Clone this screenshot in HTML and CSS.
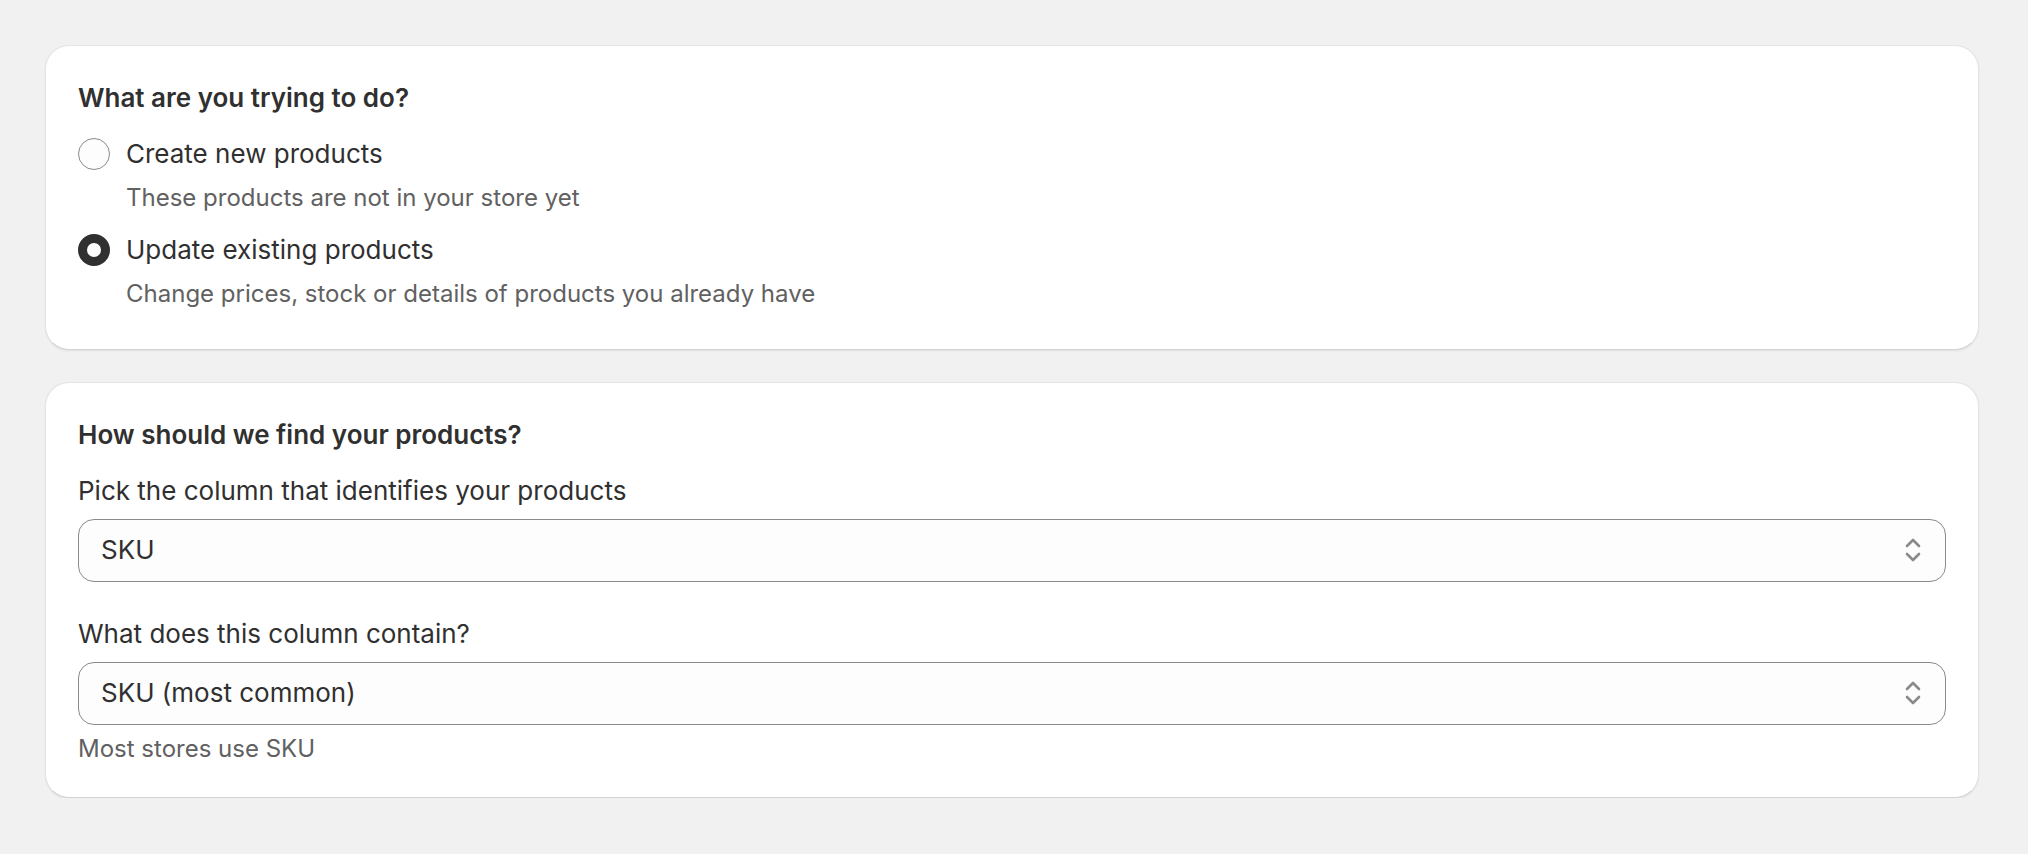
FILE: index.html
```html
<!DOCTYPE html>
<html lang="en">
<head>
<meta charset="utf-8">
<title>Import products</title>
<link rel="stylesheet" href="styles.css">
</head>
<body>
<main class="page">
  <section class="card card-mode">
    <h2 class="card-title">What are you trying to do?</h2>
    <div class="choices">
      <div class="choice">
        <div class="choice-row">
          <span class="radio"></span>
          <span class="choice-label">Create new products</span>
        </div>
        <div class="choice-desc">These products are not in your store yet</div>
      </div>
      <div class="choice">
        <div class="choice-row">
          <span class="radio radio-checked"></span>
          <span class="choice-label">Update existing products</span>
        </div>
        <div class="choice-desc">Change prices, stock or details of products you already have</div>
      </div>
    </div>
  </section>

  <section class="card">
    <h2 class="card-title">How should we find your products?</h2>
    <div class="field">
      <div class="field-label">Pick the column that identifies your products</div>
      <div class="select">
        <span class="select-value">SKU</span>
        <svg class="select-icon" width="16" height="26" viewBox="0 0 16 26" aria-hidden="true"><polyline points="2,9 8,3 14,9"/><polyline points="2,17 8,23 14,17"/></svg>
      </div>
    </div>
    <div class="field field-next">
      <div class="field-label">What does this column contain?</div>
      <div class="select">
        <span class="select-value">SKU (most common)</span>
        <svg class="select-icon" width="16" height="26" viewBox="0 0 16 26" aria-hidden="true"><polyline points="2,9 8,3 14,9"/><polyline points="2,17 8,23 14,17"/></svg>
      </div>
      <div class="help">Most stores use SKU</div>
    </div>
  </section>
</main>
</body>
</html>
```

FILE: styles.css
```css
* { box-sizing: border-box; }

html, body {
  margin: 0;
  padding: 0;
  background: #f1f1f1;
}

body {
  font-family: "Inter", "Noto Sans", "Liberation Sans", sans-serif;
  color: #303030;
}

.page {
  display: flex;
  flex-direction: column;
  gap: 32px;
  padding: 45px 49px 0 45px;
}

.card {
  background: #ffffff;
  border: 1px solid #e4e4e4;
  border-bottom-color: #d2d2d2;
  border-radius: 24px;
  box-shadow: 0 1px 2px rgba(0, 0, 0, 0.07);
  padding: 32px;
}

.card-title {
  margin: 0;
  font-size: 26px;
  line-height: 40px;
  font-weight: 600;
  color: #303030;
}

.choices {
  display: flex;
  flex-direction: column;
  gap: 16.5px;
  margin-top: 16px;
  margin-bottom: 7px;
}

.choice-row {
  display: flex;
  align-items: center;
  gap: 16px;
}

.radio {
  flex: none;
  width: 32px;
  height: 32px;
  border-radius: 50%;
  border: 1px solid #8a8a8a;
  background: #fdfdfd;
}

.radio-checked {
  border: 9px solid #303030;
  background: #ffffff;
}

.choice-label {
  font-size: 26px;
  line-height: 40px;
  color: #303030;
}

.choice-desc {
  margin-top: 7.5px;
  padding-left: 48px;
  font-size: 24px;
  line-height: 32px;
  color: #616161;
}

.field {
  margin-top: 16px;
}

.field-next {
  margin-top: 32px;
}

.field-label {
  font-size: 26px;
  line-height: 40px;
  color: #303030;
}

.select {
  margin-top: 8px;
  height: 63px;
  display: flex;
  align-items: center;
  justify-content: space-between;
  padding: 0 24px 0 22px;
  border: 1px solid #8a8a8a;
  border-radius: 16px;
  background: #fdfdfd;
}

.select-value {
  font-size: 26px;
  line-height: 40px;
  color: #303030;
}

.select-icon {
  flex: none;
  fill: none;
  stroke: #8a8a8a;
  stroke-width: 2.6;
  stroke-linecap: round;
  stroke-linejoin: round;
}

.help {
  margin-top: 8px;
  font-size: 24px;
  line-height: 32px;
  color: #616161;
}
```
